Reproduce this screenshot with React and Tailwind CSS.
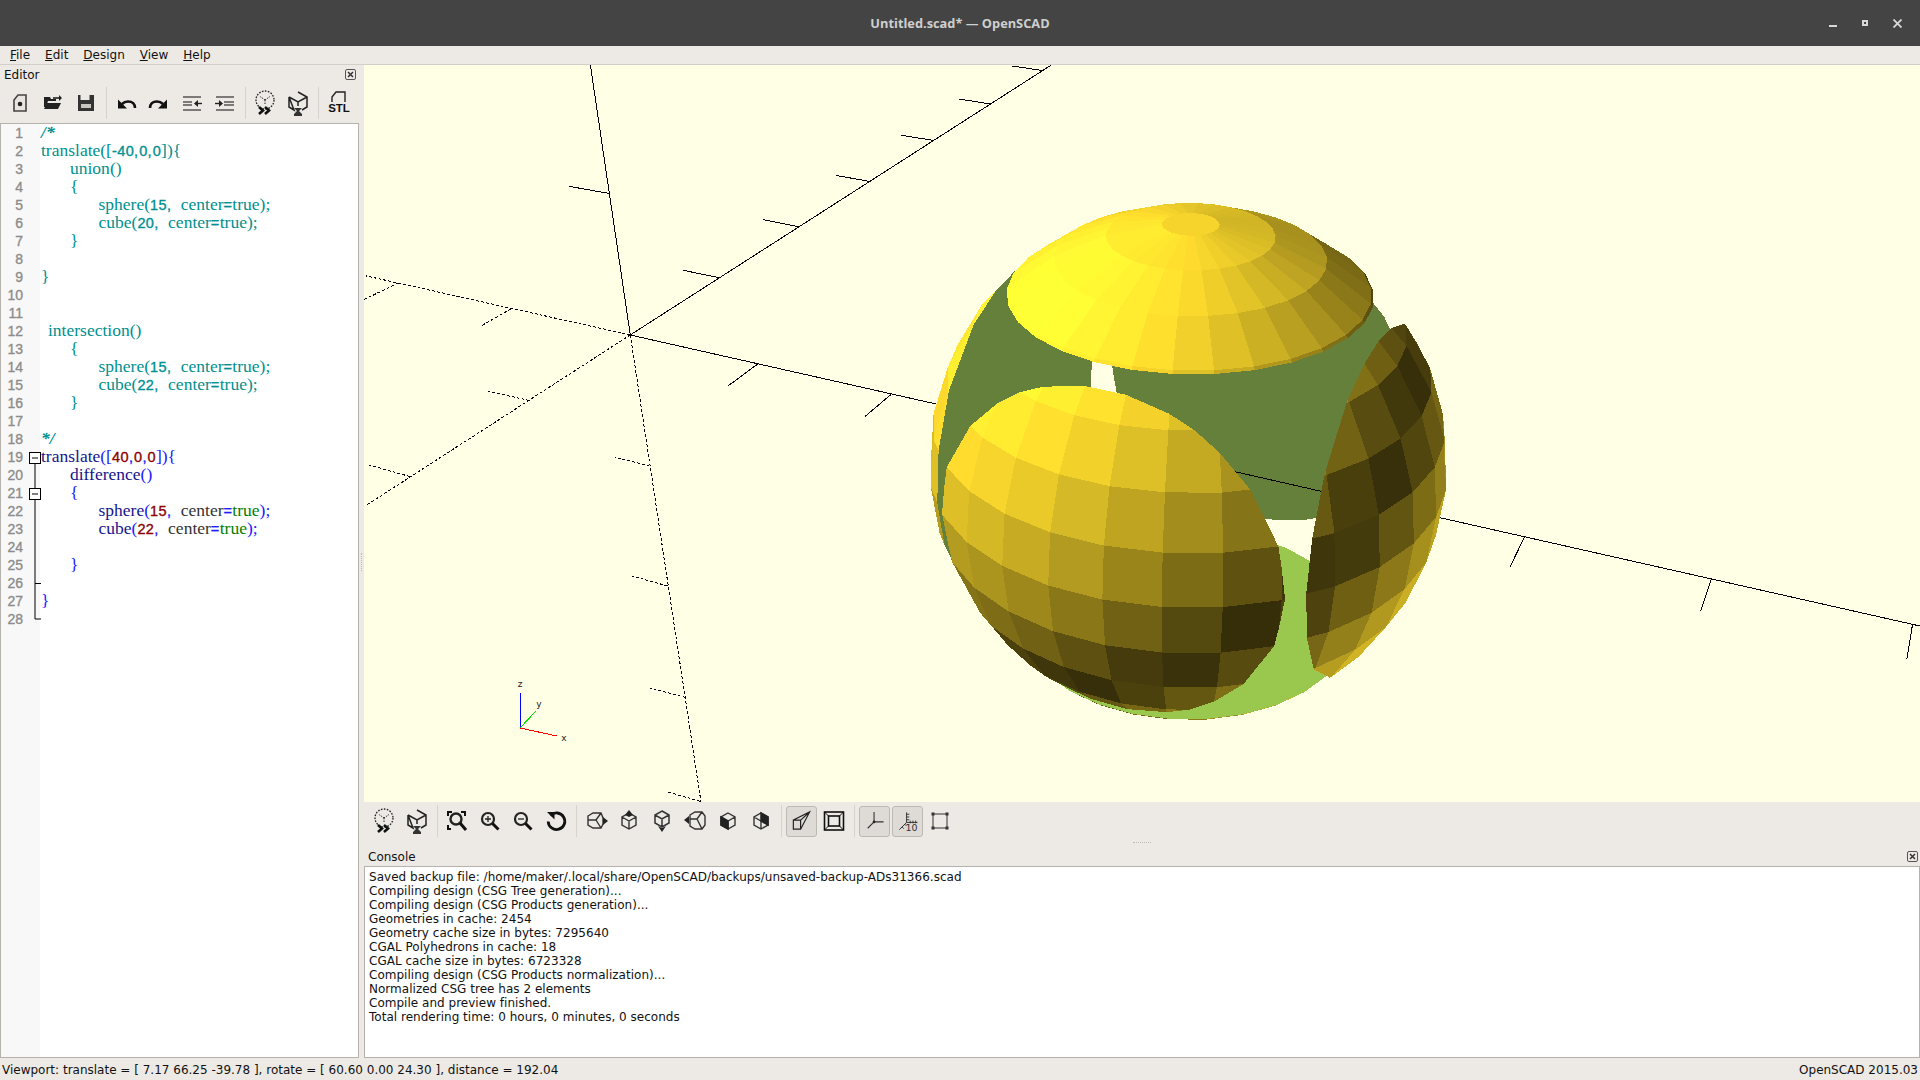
import React from "react";

/* ---------- 3D model of the part: sphere(15) minus cube(22) ---------- */
const A = (24.3 * Math.PI) / 180;
const B = (60.6 * Math.PI) / 180;
const F = 1852, D = 108.2, CX = 1142 - 364, CY = 433.5 - 65, PX = 2.66, PY = -1.6;
const view = ([x, y, z]) => {
  const xp = x * Math.cos(A) + y * Math.sin(A);
  const yp = -x * Math.sin(A) + y * Math.cos(A);
  return [xp, yp * Math.cos(B) + z * Math.sin(B), -yp * Math.sin(B) + z * Math.cos(B)];
};
const project = (p) => {
  const [r, u, t] = view(p);
  const k = F / (D - t);
  return `${(CX + k * (PX + r)).toFixed(2)},${(CY - k * (PY + u)).toFixed(2)}`;
};
const shade = (n, c) => {
  const [r, u, t] = view(n);
  const s = Math.sqrt(3);
  const b = 0.2 + Math.max(0, (-r + u + t) / s) + Math.max(0, (r - u - t) / s);
  return `rgb(${c.map((v) => Math.min(255, Math.round(v * b))).join(",")})`;
};
const dot = (a, b) => a[0] * b[0] + a[1] * b[1] + a[2] * b[2];
const clip = (poly, ax, h) => {
  const out = [];
  poly.forEach((p, i) => {
    const q = poly[(i + 1) % poly.length];
    const dp = dot(p, ax) - h, dq = dot(q, ax) - h;
    if (dp >= 0) out.push(p);
    if (dp * dq < 0) {
      const s = dp / (dp - dq);
      out.push([p[0] + (q[0] - p[0]) * s, p[1] + (q[1] - p[1]) * s, p[2] + (q[2] - p[2]) * s]);
    }
  });
  return out;
};
const R = 15, RINGS = 15, FR = 30, H = 11;
const vtx = (i, j) => {
  const ph = (Math.PI * (i + 0.5)) / RINGS, th = (2 * Math.PI * j) / FR;
  return [R * Math.sin(ph) * Math.cos(th), R * Math.sin(ph) * Math.sin(th), R * Math.cos(ph)];
};
const facets = [];
for (let i = 0; i < RINGS - 1; i++)
  for (let j = 0; j < FR; j++) facets.push([vtx(i, j), vtx(i, j + 1), vtx(i + 1, j + 1), vtx(i + 1, j)]);
facets.push(Array.from({ length: FR }, (_, j) => vtx(0, j)));
facets.push(Array.from({ length: FR }, (_, j) => vtx(RINGS - 1, j)));

const camW = (() => {
  const c = [Math.sin(A) * Math.sin(B), -Math.cos(A) * Math.sin(B), Math.cos(B)];
  return c.map((v) => v * D);
})();
const buildCap = (ax, discColor) => {
  const polys = [];
  const rim = [];
  facets.forEach((f) => {
    const c = clip(f, ax, H);
    if (c.length < 3) return;
    c.forEach((p) => {
      if (Math.abs(dot(p, ax) - H) < 1e-6) rim.push(p);
    });
    const m = f.reduce((a, p) => [a[0] + p[0], a[1] + p[1], a[2] + p[2]], [0, 0, 0]);
    const l = Math.hypot(...m);
    const n = m.map((v) => v / l);
    const toCam = camW.map((v, i) => v - c[0][i]);
    if (dot(n, toCam) > 0) polys.push({ pts: c.map(project).join(" "), fill: shade(n, [249, 215, 44]) });
  });
  const u = [ax[1], ax[2], ax[0]], v = [ax[2], ax[0], ax[1]];
  rim.sort((a, b) => Math.atan2(dot(a, v), dot(a, u)) - Math.atan2(dot(b, v), dot(b, u)));
  const rp = rim[0].map((_, i) => ax[i] * H);
  const front = dot(ax.map((a) => -a), camW.map((w, i) => w - rp[i])) > 0;
  if (front) polys.push({ pts: rim.map(project).join(" "), fill: discColor });
  return polys;
};
const DARK = "#65803a", LIGHT = "#9ac84f";
const rearCaps = [
  buildCap([0, 1, 0], DARK),
  buildCap([0, 0, -1], LIGHT),
  buildCap([-1, 0, 0], DARK),
].flat();
const frontCaps = [
  buildCap([1, 0, 0], DARK),
  buildCap([0, 0, 1], DARK),
  buildCap([0, -1, 0], DARK),
].flat();

/* ---------- axes, given in canvas pixels ---------- */
const k1 = (x, y) => [x / 2.178, y / 2.119];
const solid = [
  [[580, 572], [493, 0]], [[533, 272], [446, 257]],
  [[580, 572], [1497, 0]], [[775, 451], [695, 435]], [[948, 343], [870, 328]], [[1103, 247], [1028, 234]],
  [[1242, 160], [1170, 149]], [[1366, 83], [1296, 72]], [[1480, 12], [1411, 2]],
  [[857, 634], [793, 680]], [[1148, 698], [1091, 745]],
].map(([a, b]) => [...k1(...a), ...k1(...b)]);
const dashed = [
  [[580, 572], [5, 447]], [[320, 517], [255, 553]], [[75, 462], [0, 497]],
  [[580, 572], [5, 933]], [[360, 711], [270, 691]], [[100, 872], [12, 848]],
  [[580, 572], [734, 1562]], [[622, 850], [547, 831]], [[661, 1104], [585, 1083]],
  [[700, 1340], [622, 1320]], [[732, 1560], [660, 1540]],
].map(([a, b]) => [...k1(...a), ...k1(...b)]);
const z12 = (x, y) => [1400 + x / 3.015 - 364, 480 + y / 3 - 65];
const xTicks = [
  [[375, 172], [332, 260]], [[938, 298], [907, 392]], [[1545, 435], [1528, 537]],
].map(([a, b]) => [...z12(...a), ...z12(...b)]);

function Viewport() {
  const L = (l, i, extra) => <line key={i} x1={l[0]} y1={l[1]} x2={l[2]} y2={l[3]} {...extra} />;
  return (
    <svg viewBox="0 0 1556 737" className="block w-[1556px] h-[737px] bg-[#ffffe5]" shapeRendering="crispEdges">
      <g stroke="#000" strokeWidth="1">
        {solid.map((l, i) => L(l, i))}
        {xTicks.map((l, i) => L(l, "t" + i))}
        {L([266.3, 270, 1556, 561], "x")}
      </g>
      <g stroke="#000" strokeWidth="1" strokeDasharray="3 2">
        {dashed.map((l, i) => L(l, i))}
      </g>
      {rearCaps.map((p, i) => <polygon key={i} points={p.pts} fill={p.fill} />)}
      <line x1="846" y1="401" x2="976" y2="430.6" stroke="#000" strokeWidth="1" />
      {frontCaps.map((p, i) => <polygon key={i} points={p.pts} fill={p.fill} />)}
      <g strokeWidth="1">
        <line x1="156" y1="663" x2="156" y2="628" stroke="#0000ff" />
        <line x1="156" y1="663" x2="172" y2="646" stroke="#00dd00" />
        <line x1="156" y1="663" x2="193" y2="671" stroke="#ff0000" />
      </g>
      <g fontSize="9" fill="#222" fontFamily="'DejaVu Sans', sans-serif" textAnchor="middle">
        <text x="156" y="622">z</text>
        <text x="175" y="642">y</text>
        <text x="200" y="676">x</text>
      </g>
    </svg>
  );
}

/* ---------- icons, on a 32 x 32 box ---------- */
const Ic = ({ children, className = "" }) => (
  <svg viewBox="0 0 32 32" className={`w-[32px] h-[32px] ${className}`} fill="none" stroke="#222" strokeWidth="1.5">
    {children}
  </svg>
);
const PreviewI = () => (
  <Ic>
    <circle cx="16" cy="13" r="9" strokeDasharray="1.6 1.4" strokeWidth="1.3" />
    <path d="M16 13 11 9.5M16 13l5-3.5M16 13v5" strokeDasharray="1.4 1.2" strokeWidth="1" />
    <path d="M10 20l4 3.5-4 3.5M16 20l4 3.5-4 3.5" stroke="#111" strokeWidth="2.6" />
  </Ic>
);
const RenderI = () => (
  <Ic>
    <path d="M16 5l9 5v10l-5 3M12 23l-5-3V10zM7 10l9 5 9-5M16 15v4" />
    <path d="M12 21h8l-3 3 3 3v2h-8v-2l3-3z" fill="#333" stroke="none" />
  </Ic>
);
const NewI = () => (
  <Ic>
    <path d="M14 8h8v16H10V13z" stroke="#444" strokeWidth="1.6" fill="#e8e5e1" />
    <circle cx="16" cy="17" r="2.3" fill="#222" stroke="none" />
  </Ic>
);
const OpenI = () => (
  <Ic>
    <path d="M7 10h6l1 2h5v2H11l-2 6H7z" fill="#222" stroke="none" />
    <path d="M7 22l3-6h14l-3 6z" fill="#222" stroke="none" />
    <path d="M16 11h7" strokeWidth="1.6" />
    <path d="M22 8l3 3-3 3z" fill="#222" stroke="none" />
  </Ic>
);
const SaveI = () => (
  <Ic>
    <path d="M8 8h2.5v5h9V8H24v16H8z" fill="#333" stroke="none" />
    <rect x="11" y="17" width="10" height="4" fill="#c9c6c2" stroke="none" />
  </Ic>
);
const UndoI = ({ flip }) => (
  <Ic className={flip ? "-scale-x-100" : ""}>
    <path d="M25 21c0-4-2.6-6.5-7-6.5-2.500 0-4.500 1-6 2.500" stroke="#111" strokeWidth="2.6" />
    <path d="M8 12.500v9h9z" fill="#111" stroke="none" />
  </Ic>
);
const IndentLines = () => (
  <path d="M7 10h18M7 15h9M7 18h9M7 23h18" stroke="#555" strokeWidth="1.400" />
);
const UnindentI = () => (
  <Ic>
    <IndentLines />
    <path d="M19 16.500h7" stroke="#222" strokeWidth="1.400" />
    <path d="M22 13l-4 3.500 4 3.500z" fill="#222" stroke="none" />
  </Ic>
);
const IndentI = () => (
  <Ic>
    <path d="M7 10h18M15 15h10M15 18h10M7 23h18" stroke="#555" strokeWidth="1.400" />
    <path d="M6 16.500h6" stroke="#222" strokeWidth="1.400" />
    <path d="M10 13l4 3.500-4 3.500z" fill="#222" stroke="none" />
  </Ic>
);
const StlI = () => (
  <div className="relative w-[32px] h-[32px]">
    <svg viewBox="0 0 32 32" className="w-[32px] h-[32px]" fill="none" stroke="#222" strokeWidth="1.400">
      <path d="M10 15v-5l4-5h9v10" />
    </svg>
    <span className="absolute left-[5px] top-[15px] w-[24px] text-center font-['Liberation_Sans',sans-serif] font-bold text-[11.500px] leading-[12px] text-[#111]">STL</span>
  </div>
);
const ViewAllI = () => (
  <Ic>
    <path d="M7 11V7h4M20 7h4v4M7 20v4h3" stroke="#111" strokeWidth="2" />
    <circle cx="15" cy="14" r="5.500" stroke="#222" strokeWidth="2.400" />
    <path d="M19 18l6 7" stroke="#111" strokeWidth="3" />
  </Ic>
);
const ZoomI = ({ plus }) => (
  <Ic>
    <circle cx="14" cy="14" r="6" stroke="#222" strokeWidth="2.200" />
    <path d={plus ? "M11 14h6M14 11v6" : "M11 14h6"} stroke="#222" strokeWidth="1.300" />
    <path d="M18.500 18.500l6 6" stroke="#111" strokeWidth="3" />
  </Ic>
);
const ResetI = () => (
  <Ic>
    <path d="M10.500 10.500a8.300 8.300 0 1 1-2.300 6" stroke="#111" strokeWidth="2.800" />
    <path d="M7 7h7.500v7.500z" fill="#111" stroke="none" />
  </Ic>
);
const Cube = ({ children }) => (
  <Ic>
    <path d="M16 8l7 4v8l-7 4-7-4v-8zM9 12l7 4 7-4M16 16v8" strokeWidth="1.400" stroke="#333" />
    {children}
  </Ic>
);
const ViewRightI = () => (
  <Ic>
    <path d="M8 11l5-3h8l2 5v6l-2 4h-8l-5-3zM8 15h8l5-7M16 15l5 8" strokeWidth="1.400" stroke="#333" />
    <path d="M23 12l5 4-5 4z" fill="#222" stroke="none" />
  </Ic>
);
const ViewTopI = () => (
  <Cube><path d="M12 10l4-5 4 5-4 2z" fill="#222" stroke="none" /></Cube>
);
const ViewBottomI = () => (
  <Ic>
    <path d="M16 6l7 4v8l-7 4-7-4v-8zM9 10l7 4 7-4M16 14v8" strokeWidth="1.500" stroke="#333" />
    <path d="M12 21l4 6 4-6-4 2z" fill="#222" stroke="none" />
  </Ic>
);
const ViewLeftI = () => (
  <Ic>
    <path d="M11 10l5-3h7l3 4v9l-3 4h-7l-5-3zM11 14h7l5-7M18 14l5 10" strokeWidth="1.400" stroke="#333" />
    <path d="M10 11l-5 4 5 4z" fill="#222" stroke="none" />
  </Ic>
);
const ViewFrontI = () => (
  <Cube><path d="M9 12l7 4v8l-7-4z" fill="#222" stroke="#222" /></Cube>
);
const ViewBackI = () => (
  <Cube><path d="M16 8l7 4v8l-7-4z" fill="#222" stroke="#222" /></Cube>
);
const PerspI = () => (
  <Ic>
    <path d="M7 15h8v10H7zM7 15l18-9-10 19M15 15l10-9" stroke="#222" strokeWidth="1.300" />
  </Ic>
);
const OrthoI = () => (
  <Ic>
    <rect x="6.500" y="7" width="19" height="18" stroke="#111" strokeWidth="1.600" />
    <rect x="10.500" y="11" width="11" height="10" stroke="#111" strokeWidth="1.600" />
    <path d="M6.500 7l4 4M25.500 7l-4 4M6.500 25l4-4M25.500 25l-4-4" stroke="#111" strokeWidth="1" />
  </Ic>
);
const AxesI = () => (
  <Ic>
    <path d="M15.500 17V6M15.500 17H26M15.500 17l-7 7" stroke="#333" strokeWidth="1.200" />
    <circle cx="15.500" cy="17" r="1.500" fill="#222" stroke="none" />
  </Ic>
);
const ScaleI = () => (
  <div className="relative w-[29px] h-[29px] overflow-hidden">
    <svg viewBox="0 0 32 32" className="w-[29px] h-[29px]" fill="none" stroke="#333" strokeWidth="1.100">
      <path d="M15 17V6M15 17h12M15 17l-8 8" />
      <path d="M15 8h3M15 11h3M15 14h3M19 15v3M22 15v3M25 15v3M13 19l2 2M10 22l2 2" strokeWidth="1" />
    </svg>
    <span className="absolute left-[13px] top-[16px] font-['DejaVu_Sans',sans-serif] text-[9.500px] leading-[10px] text-[#333]">10</span>
  </div>
);
const EdgesI = () => (
  <Ic>
    <rect x="9" y="9" width="14" height="14" stroke="#333" strokeWidth="1" />
    <path d="M7.500 7.500h3v3h-3zM21.500 7.500h3v3h-3zM7.500 21.500h3v3h-3zM21.500 21.500h3v3h-3z" fill="#333" stroke="none" />
  </Ic>
);

const Sep = () => (
  <div className="w-[7px] h-[32px] flex justify-center">
    <div className="w-px h-full bg-[#d6d3cf]" />
  </div>
);
const Btn = ({ children, on }) => (
  <div className="w-[33px] h-[33px] flex items-center justify-center">
    {on ? (
      <div className="w-[31px] h-[31px] flex items-center justify-center overflow-hidden rounded-[3px] bg-[#dedbd7] border border-[#bcb9b5]">{children}</div>
    ) : children}
  </div>
);
const CloseBox = () => (
  <svg viewBox="0 0 11 11" className="w-[11px] h-[11px]" fill="none">
    <rect x="0.500" y="0.500" width="10" height="10" rx="1.500" stroke="#555" />
    <path d="M3 3l5 5M8 3L3 8" stroke="#333" strokeWidth="1.500" />
  </svg>
);

/* ---------- editor ---------- */
const SERIF = "font-['Liberation_Serif',serif] text-[17.500px]";
const DIGIT = "font-['Liberation_Sans',sans-serif] text-[14.500px] tracking-[0.4px] [-webkit-text-stroke:0.35px]";
const COMMA = "font-['Liberation_Sans',sans-serif] text-[14.500px] pr-[1px] [-webkit-text-stroke:0.35px]";
const kinds = {
  sphere: "text-[#15158c]", cube: "text-[#15158c]", translate: "text-[#15158c]", difference: "text-[#15158c]",
  center: "text-[#333333]", true: "text-[#008000]",
};
const tokenize = (s) => s.match(/\d+|[a-zA-Z]+|\s+|./g) || [];
function Code({ text, comment }) {
  return tokenize(text).map((t, i) => {
    const isNum = /^\d+$/.test(t);
    const isWord = /^[a-zA-Z]+$/.test(t);
    const isStar = t === "*" || t === "/";
    let color = comment ? "text-[#009090]" : isNum ? "text-[#8b0000]" : isWord ? kinds[t] || "text-[#15158c]" : "text-[#2020ff]";
    let cls = isNum ? DIGIT : SERIF;
    if (isStar) cls = "font-['Liberation_Serif',serif] text-[17.500px] font-bold italic";
    if (t === "=" || t === "-") cls = DIGIT;
    if (t === ",") cls = COMMA;
    return <span key={i} className={`${cls} ${color}`}>{t}</span>;
  });
}
const SP = "sphere(15,  center=true);";
const lines = [
  ["/*", 0, 1], ["translate([-40,0,0]){", 0, 1], ["union()", 1, 1], ["{", 1, 1],
  [SP, 2, 1], ["cube(20,  center=true);", 2, 1], ["}", 1, 1], ["", 0, 1], ["}", 0, 1], ["", 0, 1], ["", 0, 1],
  ["intersection()", 3, 1], ["{", 1, 1], [SP, 2, 1], ["cube(22,  center=true);", 2, 1], ["}", 1, 1], ["", 0, 1],
  ["*/", 0, 1], ["translate([40,0,0]){", 0, 0], ["difference()", 1, 0], ["{", 1, 0], [SP, 2, 0],
  ["cube(22,  center=true);", 2, 0], ["", 0, 0], ["}", 1, 0], ["", 0, 0], ["}", 0, 0], ["", 0, 0],
];
const indents = ["pl-0", "pl-[29px]", "pl-[57.500px]", "pl-[7px]"];

const Fold = () => (
  <svg viewBox="0 0 13 200" className="absolute left-[27px] top-[327px] w-[13px] h-[200px]" fill="none" stroke="#000" strokeWidth="1">
    <rect x="1.500" y="1.500" width="11" height="11" fill="#fff" />
    <path d="M4 7h6" />
    <rect x="1.500" y="37.500" width="11" height="11" fill="#fff" />
    <path d="M4 43h6" />
    <path d="M7 12.500v25M7 48.500V168H13M7 132.500h6" />
  </svg>
);

const menu = [["F", "ile"], ["E", "dit"], ["D", "esign"], ["V", "iew"], ["H", "elp"]];
const consoleLines = [
  "Saved backup file: /home/maker/.local/share/OpenSCAD/backups/unsaved-backup-ADs31366.scad",
  "Compiling design (CSG Tree generation)...",
  "Compiling design (CSG Products generation)...",
  "Geometries in cache: 2454",
  "Geometry cache size in bytes: 7295640",
  "CGAL Polyhedrons in cache: 18",
  "CGAL cache size in bytes: 6723328",
  "Compiling design (CSG Products normalization)...",
  "Normalized CSG tree has 2 elements",
  "Compile and preview finished.",
  "Total rendering time: 0 hours, 0 minutes, 0 seconds",
];

export default function App() {
  return (
    <div className="w-[1920px] h-[1080px] overflow-hidden flex flex-col bg-[#edeae6] text-[#111] font-['DejaVu_Sans',sans-serif] text-[12px]">
      {/* title bar */}
      <div className="h-[46px] shrink-0 bg-[#444444] relative flex items-center justify-center pt-[1px]">
        <span className="font-['Open_Sans',sans-serif] font-bold text-[12.800px] text-[#cfcfcf]">Untitled.scad* — OpenSCAD</span>
        <div className="absolute right-[18px] top-[19px] flex items-start gap-[25px]">
          <div className="w-[8px] h-[2px] mt-[6px] bg-[#d8d8d8]" />
          <div className="w-[6px] h-[6px] mt-[1px] border-2 border-[#d8d8d8]" />
          <svg viewBox="0 0 9 9" className="w-[9px] h-[9px]" stroke="#d8d8d8" strokeWidth="1.800" fill="none"><path d="M.5.5l8 8M8.500.5l-8 8" /></svg>
        </div>
      </div>
      {/* menu */}
      <div className="h-[19px] shrink-0 flex items-center gap-[15px] pl-[10px] border-b border-[#d2cfcb] text-[12px] leading-[18px]">
        {menu.map(([a, b]) => (
          <span key={a}><span className="underline">{a}</span>{b}</span>
        ))}
      </div>
      {/* main */}
      <div className="flex-1 min-h-0 flex">
        {/* editor dock */}
        <div className="w-[359px] shrink-0 flex flex-col">
          <div className="h-[19px] shrink-0 flex items-center justify-between pl-[4px] pr-[3px]">
            <span>Editor</span>
            <CloseBox />
          </div>
          <div className="h-[39px] shrink-0 flex items-center pl-[3.500px] pb-[2px]">
            <Btn><NewI /></Btn><Btn><OpenI /></Btn><Btn><SaveI /></Btn><Sep />
            <Btn><UndoI /></Btn><Btn><UndoI flip /></Btn><Btn><UnindentI /></Btn><Btn><IndentI /></Btn><Sep />
            <Btn><PreviewI /></Btn><Btn><RenderI /></Btn><Sep /><Btn><StlI /></Btn>
          </div>
          <div className="flex-1 min-h-0 relative flex border border-[#b5b2ae] bg-white overflow-hidden">
            <div className="w-[39px] shrink-0 bg-[#f8f8f8] pr-[17px] text-right">
              {lines.map((_, i) => (
                <div key={i} className="h-[18px] leading-[18px] font-['Liberation_Sans',sans-serif] text-[14px] [-webkit-text-stroke:0.35px] text-[#8c8c8c]">{i + 1}</div>
              ))}
            </div>
            <Fold />
            <div className="flex-1 pl-[1px] -mt-[1px]">
              {lines.map(([t, ind, c], i) => (
                <div key={i} className={`h-[18px] leading-[18px] whitespace-pre ${indents[ind]}`}>
                  <Code text={t} comment={!!c} />
                </div>
              ))}
            </div>
          </div>
        </div>
        {/* splitter */}
        <div className="w-[5px] shrink-0 flex items-center justify-center">
          <div className="w-px h-[18px] border-l border-dotted border-[#bdbab6]" />
        </div>
        {/* right column */}
        <div className="flex-1 min-w-0 flex flex-col">
          <Viewport />
          <div className="h-[38px] shrink-0 flex items-center pl-[3.500px]">
            <Btn><PreviewI /></Btn><Btn><RenderI /></Btn><Sep />
            <Btn><ViewAllI /></Btn><Btn><ZoomI plus /></Btn><Btn><ZoomI /></Btn><Btn><ResetI /></Btn><Sep />
            <Btn><ViewRightI /></Btn><Btn><ViewTopI /></Btn><Btn><ViewBottomI /></Btn><Btn><ViewLeftI /></Btn><Btn><ViewFrontI /></Btn><Btn><ViewBackI /></Btn><Sep />
            <Btn on><PerspI /></Btn><Btn><OrthoI /></Btn><Sep />
            <Btn on><AxesI /></Btn><Btn on><ScaleI /></Btn><Btn><EdgesI /></Btn>
          </div>
          <div className="h-[10px] shrink-0 flex justify-center">
            <div className="w-[18px] h-px mt-[2px] border-t border-dotted border-[#bdbab6]" />
          </div>
          <div className="h-[16px] shrink-0 flex items-center justify-between pl-[4px] pr-[2px] pb-[3px]">
            <span>Console</span>
            <CloseBox />
          </div>
          <div className="flex-1 min-h-0 border border-[#b5b2ae] bg-white pl-[4px] pt-[3px] text-[12px] leading-[14px] tracking-[0.02px]">
            {consoleLines.map((l) => <div key={l}>{l}</div>)}
          </div>
        </div>
      </div>
      {/* status */}
      <div className="h-[22px] shrink-0 flex items-center justify-between pl-[2px] pr-[2px] pt-[1px]">
        <span>Viewport: translate = [ 7.17 66.25 -39.78 ], rotate = [ 60.60 0.00 24.30 ], distance = 192.04</span>
        <span>OpenSCAD 2015.03</span>
      </div>
    </div>
  );
}
